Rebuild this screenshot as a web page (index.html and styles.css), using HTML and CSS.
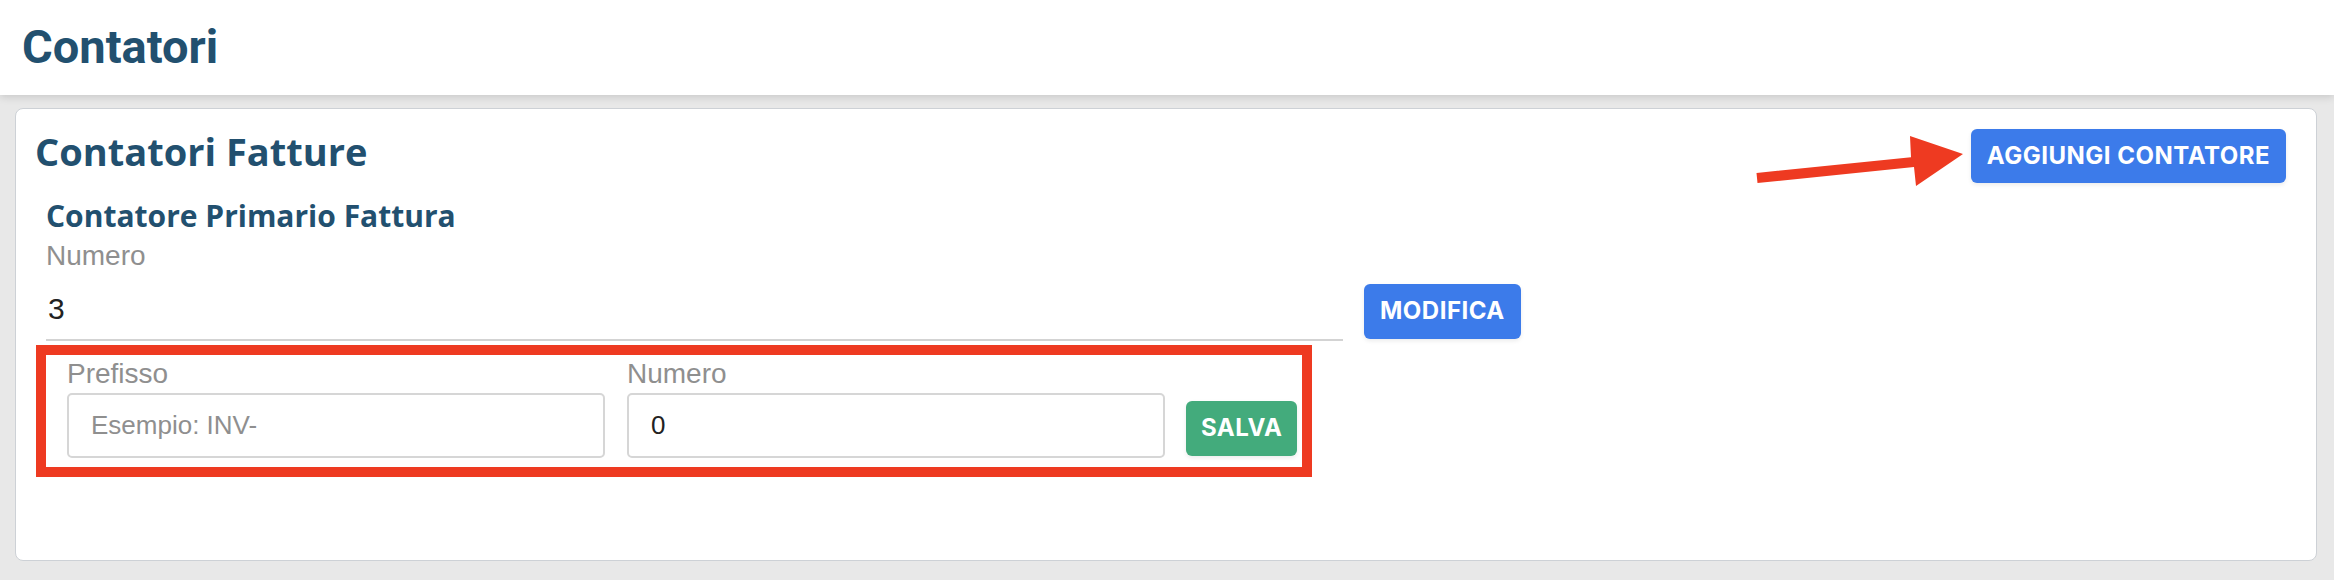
FILE: index.html
```html
<!DOCTYPE html>
<html lang="it">
<head>
<meta charset="utf-8">
<title>Contatori</title>
<link rel="stylesheet" href="styles.css">
</head>
<body>
<header class="topbar">
  <h1 class="page-title">Contatori</h1>
</header>
<main class="card">
  <div class="card-head">
    <h2 class="card-title">Contatori Fatture</h2>
    <button class="btn btn-blue">AGGIUNGI CONTATORE</button>
  </div>
  <section class="counter">
    <h3 class="counter-title">Contatore Primario Fattura</h3>
    <div class="value-row">
      <div class="value-field">
        <div class="label">Numero</div>
        <div class="value">3</div>
      </div>
      <button class="btn btn-blue btn-edit">MODIFICA</button>
    </div>
    <div class="highlight">
      <div class="form-row">
        <label class="field">
          <span class="label">Prefisso</span>
          <input class="input" type="text" placeholder="Esempio: INV-">
        </label>
        <label class="field">
          <span class="label">Numero</span>
          <input class="input" type="text" value="0">
        </label>
        <button class="btn btn-green">SALVA</button>
      </div>
    </div>
  </section>
  <svg class="arrow" width="216" height="57" viewBox="0 0 216 57" aria-hidden="true">
    <polygon points="6.5,40 161,24.3 160,3 213,21 166,53 164,34 7.5,50" fill="#ee3a21"/>
  </svg>
</main>
</body>
</html>
```

FILE: styles.css
```css
* { box-sizing: border-box; }

html, body {
  margin: 0;
  padding: 0;
  background: #e8e8e8;
  font-family: "Liberation Sans", Arial, sans-serif;
}

body {
  height: 580px;
  overflow: hidden;
}

.topbar {
  height: 95px;
  background: #ffffff;
  padding: 19px 22px 0;
  box-shadow: 0 2px 8px rgba(0, 0, 0, 0.14);
  position: relative;
  z-index: 1;
}

.page-title {
  margin: 0;
  font-family: Roboto, "Liberation Sans", sans-serif;
  font-weight: 700;
  font-size: 47px;
  line-height: 55px;
  color: #22506f;
}

.card {
  position: relative;
  margin: 13px 17px 0 15px;
  background: #ffffff;
  border: 1px solid #cdd1d6;
  border-radius: 8px;
  padding: 16px 30px 83px 19px;
}

.card-head {
  display: flex;
  justify-content: space-between;
  align-items: flex-start;
}

.card-title {
  margin: 0;
  font-family: "Open Sans", "Noto Sans", sans-serif;
  font-weight: 700;
  font-size: 38px;
  line-height: 52px;
  color: #22506f;
}

.btn {
  border: none;
  border-radius: 6px;
  color: #ffffff;
  font-family: Inter, "Liberation Sans", sans-serif;
  font-weight: 700;
  font-size: 24px;
  line-height: 30px;
  letter-spacing: 0.5px;
  padding: 12px 16px;
  box-shadow: 0 2px 4px rgba(0, 0, 0, 0.08);
  white-space: nowrap;
  cursor: pointer;
}

.btn-blue { background: #3c7bea; }
.btn-green { background: #43ab7c; margin-bottom: 2px; padding: 12px 15px 13px; }

.card-head .btn { margin-top: 4px; }

.counter {
  margin-left: 11px;
  margin-top: 12px;
}

.counter-title {
  margin: 0;
  font-family: "Open Sans", "Noto Sans", sans-serif;
  font-weight: 700;
  font-size: 30px;
  line-height: 41px;
  color: #22506f;
}

.value-row {
  display: flex;
  align-items: flex-end;
  gap: 21px;
  margin-top: 4px;
}

.value-field {
  width: 1297px;
}

.label {
  display: block;
  font-size: 28px;
  line-height: 32px;
  color: #8f8f8f;
}

.value {
  font-size: 30px;
  line-height: 34px;
  color: #222222;
  padding: 20px 2px 13px;
  border-bottom: 2px solid #d3d3d3;
}

.btn-edit {
  margin-bottom: 2px;
  padding-top: 12px;
  padding-bottom: 13px;
}

.highlight {
  margin: 4px 0 0 -10px;
  width: 1276px;
  border: 10px solid #ee3a21;
  padding: 3px 5px 9px 21px;
}

.form-row {
  display: flex;
  align-items: flex-end;
  gap: 22px;
}

.field {
  display: flex;
  flex-direction: column;
  gap: 3px;
  width: 538px;
}

.input {
  width: 538px;
  height: 65px;
  border: 2px solid #d6d6d6;
  border-radius: 5px;
  padding: 0 22px;
  font-family: "Liberation Sans", Arial, sans-serif;
  font-size: 26px;
  color: #222222;
  background: #ffffff;
  outline: none;
}

.input::placeholder {
  color: #8f8f8f;
}

.form-row .btn-green { margin-left: -1px; }

.arrow {
  position: absolute;
  left: 1734px;
  top: 24px;
}
```
